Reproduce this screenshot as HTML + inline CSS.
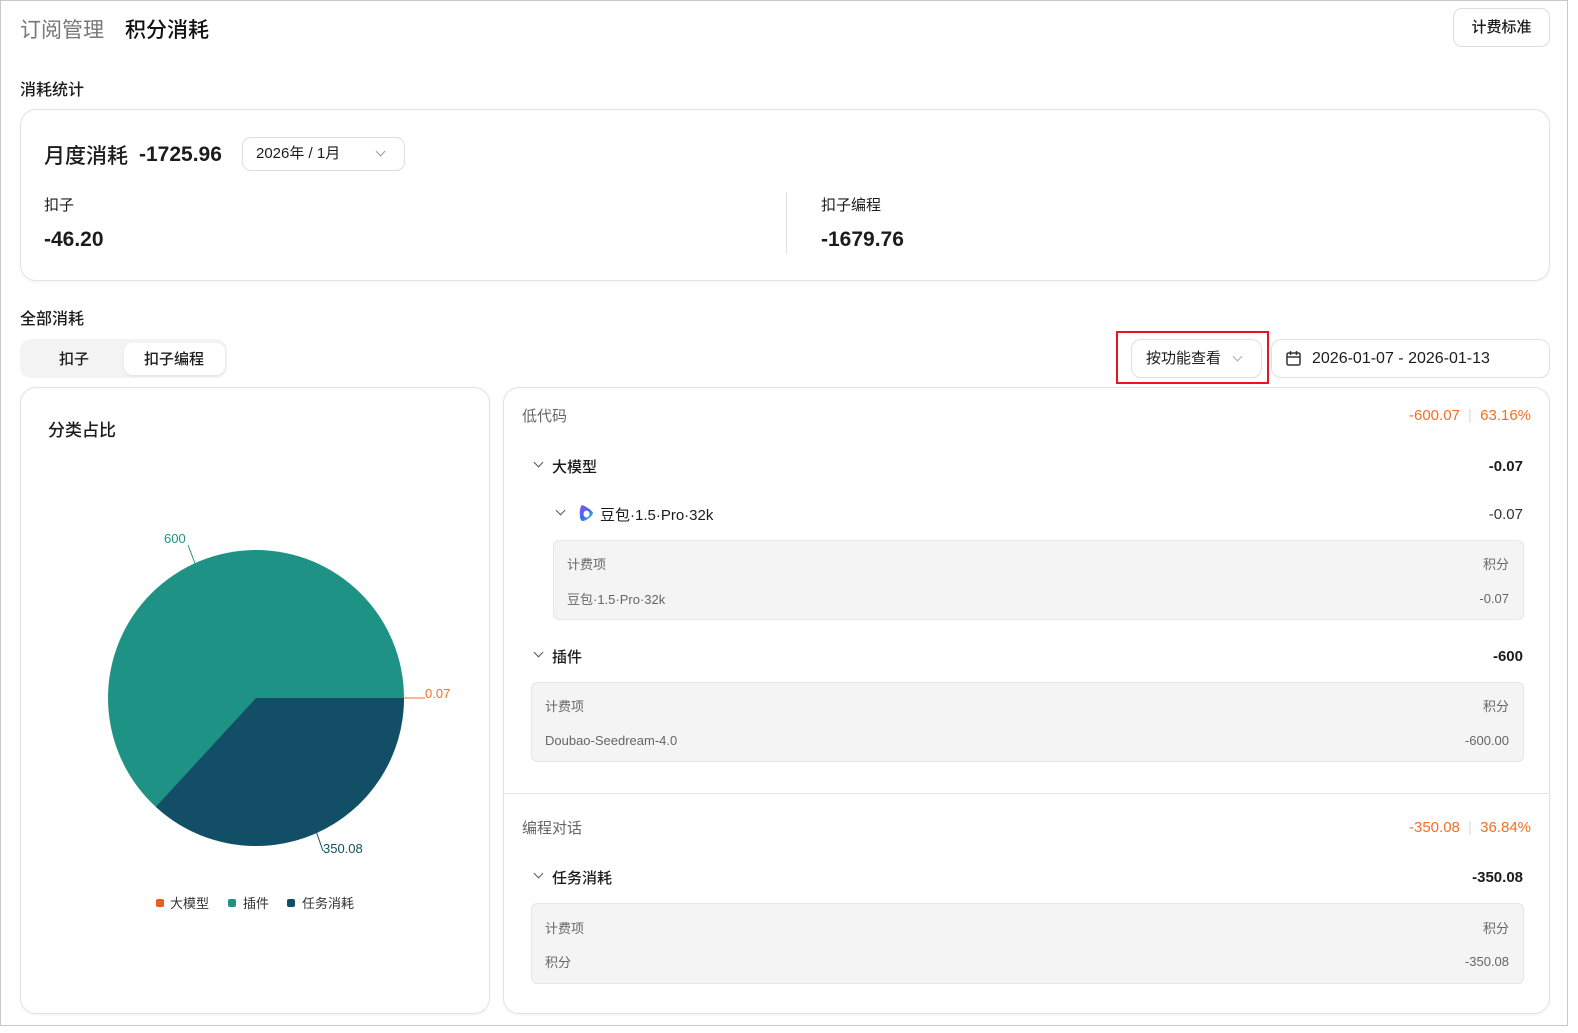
<!DOCTYPE html>
<html><head><meta charset="utf-8"><style>
*{box-sizing:border-box;margin:0;padding:0}
body{width:1578px;height:1033px;overflow:hidden;background:#fff;font-family:"Liberation Sans","Noto Sans CJK SC",sans-serif;color:#1c1c1c;position:relative}
.frame{position:absolute;left:0;top:0;width:1568px;height:1026px;border:1px solid #c8c8c8}
.a{position:absolute;white-space:nowrap}
.card{position:absolute;border:1px solid #e3e3e3;border-radius:16px;background:#fff;box-shadow:0 1px 3px rgba(0,0,0,.05)}
.box{position:absolute;background:#f4f4f4;border:1px solid #e6e6e6;border-radius:6px}
.chev{display:inline-block;width:7px;height:7px;border-right:1.3px solid #555;border-bottom:1.3px solid #555;transform:rotate(45deg)}
.or{color:#f46f23}
.g{color:#666}
.n{font-weight:600}
</style></head><body>
<div class="frame"></div>
<div class="a" style="left:20px;top:14px;font-size:21px;color:#777">订阅管理</div>
<div class="a" style="left:125px;top:14px;font-size:21px;font-weight:500;color:#111">积分消耗</div>
<div class="a" style="left:1453px;top:8px;width:97px;height:39px;border:1px solid #ddd;border-radius:9px;font-size:15px;text-align:center;line-height:37px;font-weight:500">计费标准</div>
<div class="a" style="left:20px;top:76px;font-size:16px;font-weight:500">消耗统计</div>

<div class="card" style="left:20px;top:109px;width:1530px;height:172px"></div>
<div class="a" style="left:44px;top:140px;font-size:21px;font-weight:500">月度消耗</div>
<div class="a n" style="left:139px;top:143px;font-size:21px">-1725.96</div>
<div class="a" style="left:242px;top:137px;width:163px;height:34px;border:1px solid #ddd;border-radius:9px;font-size:15px;line-height:32px;padding-left:13px">2026年 / 1月<span class="chev" style="position:absolute;right:20px;top:10px;border-color:#999"></span></div>
<div class="a" style="left:44px;top:194px;font-size:15px">扣子</div>
<div class="a n" style="left:44px;top:228px;font-size:21px">-46.20</div>
<div class="a" style="left:786px;top:192px;width:1px;height:62px;background:#e3e3e3"></div>
<div class="a" style="left:821px;top:194px;font-size:15px">扣子编程</div>
<div class="a n" style="left:821px;top:228px;font-size:21px">-1679.76</div>

<div class="a" style="left:20px;top:305px;font-size:16px;font-weight:500">全部消耗</div>
<div class="a" style="left:20px;top:339px;width:207px;height:39px;background:#f3f3f3;border-radius:11px"></div>
<div class="a" style="left:124px;top:343px;width:101px;height:32px;background:#fff;border-radius:9px;box-shadow:0 1px 2px rgba(0,0,0,.08)"></div>
<div class="a" style="left:59px;top:348px;font-size:15px;font-weight:500">扣子</div>
<div class="a" style="left:144px;top:348px;font-size:15px;font-weight:500">扣子编程</div>

<div class="a" style="left:1116px;top:331px;width:153px;height:53px;border:2px solid #e8141e"></div>
<div class="a" style="left:1131px;top:339px;width:131px;height:39px;border:1px solid #e0e0e0;border-radius:10px;font-size:15px;line-height:37px;padding-left:14px">按功能查看<span class="chev" style="position:absolute;right:20px;top:13px;border-color:#aaa"></span></div>
<div class="a" style="left:1271px;top:339px;width:279px;height:39px;border:1px solid #e0e0e0;border-radius:10px;font-size:16px;line-height:37px;padding-left:40px">2026-01-07 - 2026-01-13
<svg style="position:absolute;left:13px;top:10px" width="17" height="17" viewBox="0 0 17 17" fill="none" stroke="#333" stroke-width="1.5"><rect x="2" y="3" width="13" height="12" rx="1.5"/><path d="M2 7h13M5.5 1v4M11.5 1v4"/></svg></div>

<div class="card" style="left:20px;top:387px;width:470px;height:627px"></div>
<div class="a" style="left:48px;top:416px;font-size:17px;font-weight:500">分类占比</div>
<svg class="a" style="left:0;top:0" width="500" height="1000">
<circle cx="256" cy="698" r="148" fill="#1e9385"/>
<path d="M256 698 L404 698 A148 148 0 0 1 155.8 806.9 Z" fill="#124f67"/>
<path d="M404 698 H425" stroke="#f46f23" stroke-width="1"/>
<path d="M196 566 L188 545" stroke="#1e9385" stroke-width="1"/>
<path d="M316 831 L323 851" stroke="#124f67" stroke-width="1"/>
<text x="164" y="543" font-size="13" fill="#1e9385" font-family="Liberation Sans">600</text>
<text x="425" y="698" font-size="13" fill="#f46f23" font-family="Liberation Sans">0.07</text>
<text x="323" y="853" font-size="13" fill="#124f67" font-family="Liberation Sans">350.08</text>
<rect x="156" y="899" width="8" height="8" rx="2" fill="#ea5d1f"/>
<rect x="228" y="899" width="8" height="8" rx="2" fill="#1e9385"/>
<rect x="287" y="899" width="8" height="8" rx="2" fill="#124f67"/>
<text x="170" y="908" font-size="13" fill="#333" font-family="Liberation Sans,Noto Sans CJK SC">大模型</text>
<text x="243" y="908" font-size="13" fill="#333" font-family="Liberation Sans,Noto Sans CJK SC">插件</text>
<text x="302" y="908" font-size="13" fill="#333" font-family="Liberation Sans,Noto Sans CJK SC">任务消耗</text>
</svg>

<div class="card" style="left:503px;top:387px;width:1047px;height:627px"></div>
<div class="a g" style="left:522px;top:405px;font-size:15px">低代码</div>
<div class="a or" style="right:47px;top:407px;font-size:15px">-600.07 <span style="color:#ddd;margin:0 4px">|</span> 63.16%</div>
<span class="chev a" style="left:535px;top:459px"></span>
<div class="a" style="left:552px;top:456px;font-size:15px;font-weight:500">大模型</div>
<div class="a n" style="right:55px;top:458px;font-size:15px">-0.07</div>
<span class="chev a" style="left:557px;top:507px"></span>
<svg class="a" style="left:577px;top:504px" width="18" height="18" viewBox="0 0 18 18"><defs><linearGradient id="d" x1="0" y1="0" x2="1" y2="1"><stop offset="0" stop-color="#a14cf5"/><stop offset=".5" stop-color="#3a67f7"/><stop offset="1" stop-color="#2fd6c3"/></linearGradient></defs><path d="M5 1 C8 2 15 6 16 9 C15 13 9 17 5 17 C2 16 2 3 5 1Z" fill="url(#d)"/><ellipse cx="9.5" cy="10" rx="3" ry="3.5" fill="#fff"/></svg>
<div class="a" style="left:600px;top:504px;font-size:15px">豆包·1.5·Pro·32k</div>
<div class="a" style="right:55px;top:506px;font-size:15px;color:#333">-0.07</div>
<div class="box" style="left:553px;top:540px;width:971px;height:80px"></div>
<div class="a g" style="left:567px;top:554px;font-size:13px">计费项</div>
<div class="a g" style="right:69px;top:554px;font-size:13px">积分</div>
<div class="a g" style="left:567px;top:589px;font-size:13px">豆包·1.5·Pro·32k</div>
<div class="a g" style="right:69px;top:591px;font-size:13px">-0.07</div>

<span class="chev a" style="left:535px;top:649px"></span>
<div class="a" style="left:552px;top:646px;font-size:15px;font-weight:500">插件</div>
<div class="a n" style="right:55px;top:648px;font-size:15px">-600</div>
<div class="box" style="left:531px;top:682px;width:993px;height:80px"></div>
<div class="a g" style="left:545px;top:696px;font-size:13px">计费项</div>
<div class="a g" style="right:69px;top:696px;font-size:13px">积分</div>
<div class="a g" style="left:545px;top:733px;font-size:13px">Doubao-Seedream-4.0</div>
<div class="a g" style="right:69px;top:733px;font-size:13px">-600.00</div>

<div class="a" style="left:504px;top:793px;width:1045px;height:1px;background:#e3e3e3"></div>
<div class="a g" style="left:522px;top:817px;font-size:15px">编程对话</div>
<div class="a or" style="right:47px;top:819px;font-size:15px">-350.08 <span style="color:#ddd;margin:0 4px">|</span> 36.84%</div>
<span class="chev a" style="left:535px;top:870px"></span>
<div class="a" style="left:552px;top:867px;font-size:15px;font-weight:500">任务消耗</div>
<div class="a n" style="right:55px;top:869px;font-size:15px">-350.08</div>
<div class="box" style="left:531px;top:903px;width:993px;height:81px"></div>
<div class="a g" style="left:545px;top:918px;font-size:13px">计费项</div>
<div class="a g" style="right:69px;top:918px;font-size:13px">积分</div>
<div class="a g" style="left:545px;top:952px;font-size:13px">积分</div>
<div class="a g" style="right:69px;top:954px;font-size:13px">-350.08</div>
</body></html>
